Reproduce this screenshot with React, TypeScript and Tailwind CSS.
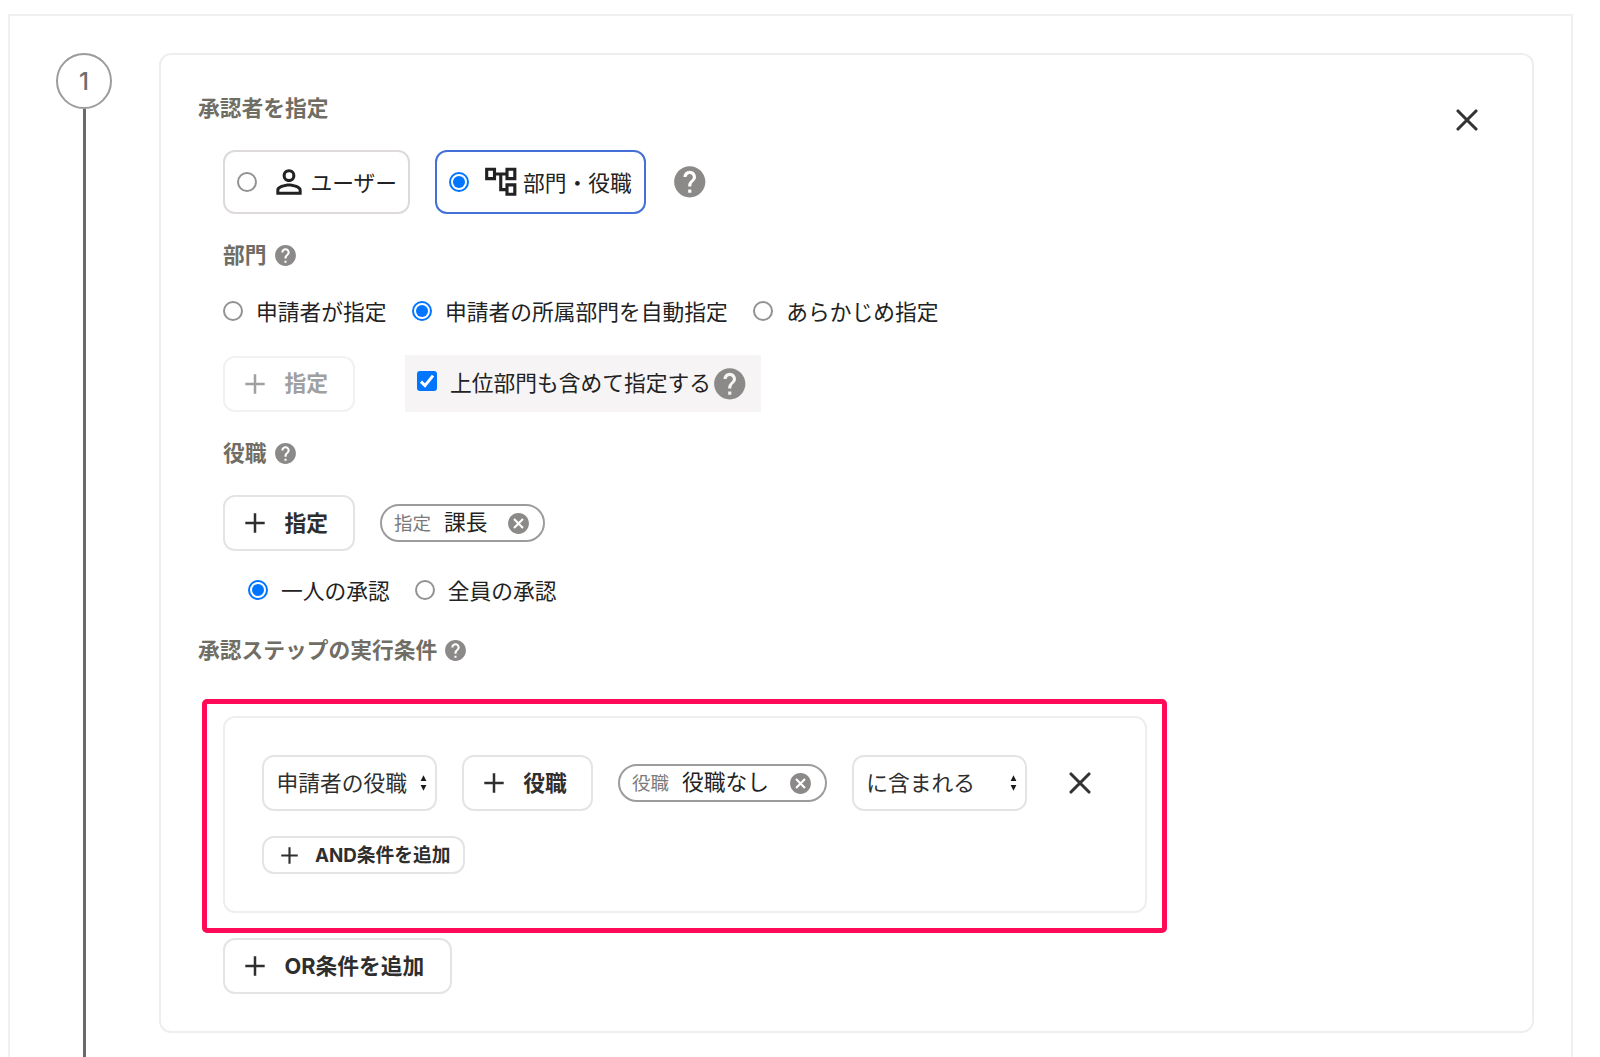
import type { ReactNode } from "react";
import clsx from "clsx";
import { MdCancel, MdHelp, MdOutlineAccountTree, MdPersonOutline } from "react-icons/md";

function Radio({ checked = false }: { checked?: boolean }) {
  return (
    <span
      className={clsx(
        "flex size-5 shrink-0 items-center justify-center rounded-full bg-white",
        checked ? "border-2 border-[#0075ff]" : "border-2 border-[#929292]",
      )}
    >
      {checked && <span className="size-3 rounded-full bg-[#0075ff]" />}
    </span>
  );
}

function RadioOption({ label, checked }: { label: string; checked?: boolean }) {
  return (
    <label className="flex items-center">
      <Radio checked={checked} />
      <span className="relative top-[2px] ml-[13px]">{label}</span>
    </label>
  );
}

function Plus({ size = 20 }: { size?: number }) {
  return (
    <svg width={size} height={size} viewBox="0 0 20 20" fill="none" stroke="currentColor" strokeWidth="2.5" className="shrink-0">
      <path d="M10 0.3v19.4M0.3 10h19.4" />
    </svg>
  );
}

function Close() {
  return (
    <svg width="22" height="22" viewBox="0 0 22 22" fill="none" stroke="#333" strokeWidth="3.1" strokeLinecap="round" className="shrink-0">
      <path d="M2 2l18 18M20 2L2 20" />
    </svg>
  );
}

function Heading({ children, help = true }: { children: ReactNode; help?: boolean }) {
  return (
    <h2 className="flex h-[22px] items-center font-bold text-[#706d65]">
      <span className="relative top-px">{children}</span>
      {help && <MdHelp className="ml-1.5 size-[25px] text-[#8c8989]" />}
    </h2>
  );
}

function AddButton({ label, disabled = false, className }: { label: string; disabled?: boolean; className?: string }) {
  return (
    <button
      className={clsx(
        "flex h-14 items-center rounded-xl border-2 pl-5 font-bold",
        disabled ? "border-[#f1f1f1] text-[#a0a0a0]" : "border-[#e4e4e4] text-[#2e2e2e]",
        className,
      )}
    >
      <Plus />
      <span className={clsx("relative ml-[19.5px]", disabled ? "top-0" : "top-px")}>{label}</span>
    </button>
  );
}

function Chip({ kind, name, className }: { kind: string; name: string; className?: string }) {
  return (
    <span className={clsx("flex h-[38px] items-center rounded-full border-2 border-[#9c9c9c] pl-3", className)}>
      <span className="text-[18.5px] text-[#7a7a7a]">{kind}</span>
      <span className="ml-[13px]">{name}</span>
      <MdCancel className="ml-auto mr-3 size-[25px] text-[#8c8989]" />
    </span>
  );
}

function SelectBox({ label }: { label: string }) {
  return (
    <span className="flex h-14 w-[175px] items-center justify-between rounded-xl border-2 border-[#e4e4e4] pl-[12.5px] pr-[8px]">
      <span className="relative top-px text-[#2e2e2e]">{label}</span>
      <svg width="7" height="16" viewBox="0 0 7 16" fill="#1c1c1c">
        <path d="M3.5 0.3L6.4 6H0.6zM3.5 15.7L0.6 10H6.4z" />
      </svg>
    </span>
  );
}

export default function App() {
  return (
    <div className="h-[1057px] w-[1600px] overflow-hidden bg-white pl-2 pt-3.5 font-['Inter','Noto_Sans_CJK_JP',sans-serif] text-[21.75px] leading-none text-[#222]">
      <div className="flex h-[1043px] w-[1565px] border-2 border-b-0 border-[#f0f0f0] pl-[46px] pt-[37px]">
        {/* step marker */}
        <div className="flex w-14 flex-col items-center">
          <div className="flex size-14 shrink-0 items-center justify-center rounded-full border-2 border-[#9c9c9c] pt-0.5 text-2xl font-medium text-[#6e6e6e]">
            1
          </div>
          <div className="w-[3px] flex-1 bg-[#6a6a6a]" />
        </div>

        <div className="ml-[47px] h-[980px] w-[1375px] whitespace-nowrap rounded-xl border-2 border-[#eeeeee] pl-[37px] pr-[54.5px] pt-[42px]">
          <div className="flex h-[22px] items-start justify-between">
            <Heading help={false}>承認者を指定</Heading>
            <button className="mt-3">
              <Close />
            </button>
          </div>

          <div className="ml-[25px] mt-[31px] flex h-16 items-center">
            <label className="flex h-16 w-[187px] items-center rounded-xl border-2 border-[#dedada] pl-3">
              <Radio />
              <MdPersonOutline className="ml-[12.5px] size-[38px]" />
              <span className="relative top-[1.5px] ml-[3px]">ユーザー</span>
            </label>
            <label className="ml-[25px] flex h-16 w-[211px] items-center rounded-xl border-2 border-[#4470d8] pl-3">
              <Radio checked />
              <MdOutlineAccountTree className="ml-[13px] size-[37.5px]" />
              <span className="relative top-[1.5px] ml-[3.5px]">部門・役職</span>
            </label>
            <MdHelp className="ml-[24.5px] size-[37.5px] text-[#8c8989]" />
          </div>

          <div className="ml-[25px]">
            <div className="mt-[30px]">
              <Heading>部門</Heading>
            </div>

            <div className="mt-[35px] flex h-5 items-center gap-[25.5px]">
              <RadioOption label="申請者が指定" />
              <RadioOption label="申請者の所属部門を自動指定" checked />
              <RadioOption label="あらかじめ指定" />
            </div>

            <div className="mt-[34px] flex h-[57px] items-center">
              <AddButton label="指定" disabled className="w-[132px]" />
              <label className="ml-[50px] flex h-[57px] w-[356px] items-center bg-[#f6f4f5] pl-3">
                <span className="mb-[5px] flex size-5 items-center justify-center rounded-[3px] bg-[#0075ff]">
                  <svg width="16" height="16" viewBox="0 0 16 16" fill="none" stroke="#fff" strokeWidth="3">
                    <path d="M2 8.6l4 4L14 2.6" />
                  </svg>
                </span>
                <span className="ml-[13px]">上位部門も含めて指定する</span>
                <MdHelp className="size-[37.5px] text-[#8c8989]" />
              </label>
            </div>

            <div className="mt-[30px]">
              <Heading>役職</Heading>
            </div>

            <div className="mt-[31px] flex h-14 items-center">
              <AddButton label="指定" className="w-[132px]" />
              <Chip kind="指定" name="課長" className="ml-[25px] w-[165px]" />
            </div>

            <div className="ml-[25px] mt-[29px] flex h-5 items-center gap-[25px]">
              <RadioOption label="一人の承認" checked />
              <RadioOption label="全員の承認" />
            </div>
          </div>

          <div className="mt-[39px]">
            <Heading>承認ステップの実行条件</Heading>
          </div>

          <div className="ml-1 mt-[38px] h-[234px] w-[965px] rounded-[5px] border-[5.5px] border-[#ff0a57] pl-4 pt-3">
            <div className="h-[197px] w-[924px] rounded-xl border-2 border-[#eeeeee] pl-[37px] pt-[37px]">
              <div className="flex items-center gap-[24.75px]">
                <SelectBox label="申請者の役職" />
                <AddButton label="役職" className="w-[131.5px]" />
                <Chip kind="役職" name="役職なし" className="w-[209px]" />
                <SelectBox label="に含まれる" />
                <button className="ml-[17px]">
                  <Close />
                </button>
              </div>
              <button className="mt-[25px] flex h-[38px] w-[203px] items-center rounded-xl border-2 border-[#e4e4e4] pl-[17px] text-[18.75px] font-bold text-[#2e2e2e]">
                <Plus size={17} />
                <span className="relative top-px ml-[17px]">AND条件を追加</span>
              </button>
            </div>
          </div>

          <AddButton label="OR条件を追加" className="ml-[25px] mt-[5px] w-[229px]" />
        </div>
      </div>
    </div>
  );
}
